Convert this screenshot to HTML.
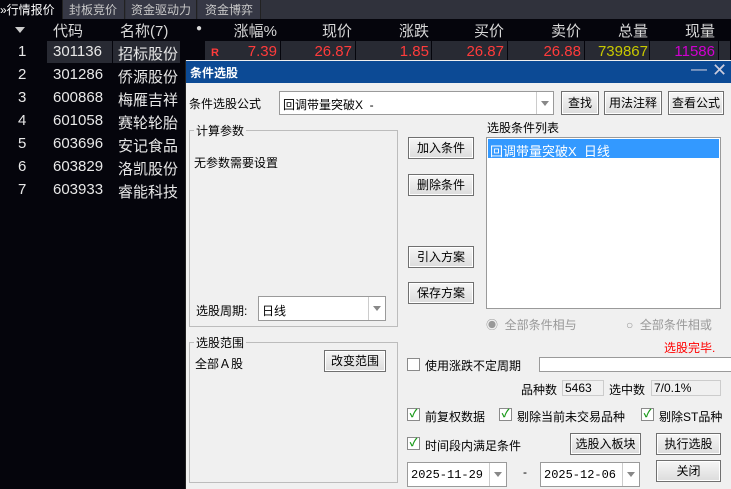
<!DOCTYPE html>
<html><head><meta charset="utf-8"><style>
*{margin:0;padding:0;box-sizing:border-box}
body{width:731px;height:489px;overflow:hidden;background:#05050c;font-family:"Liberation Sans","Noto Sans CJK SC",sans-serif;position:relative}
.a{position:absolute;white-space:nowrap}
.t{color:#c8c8c8;font-size:12px;top:1px}
.tab{position:absolute;top:0;height:19px;background:#363845;border-right:1px solid #222}
.h{color:#d8d8d8;font-size:15px;top:20px}
.c{font-size:15px}
.w{color:#e8e8e8}
.r{color:#ff3b3b}
.cell{position:absolute;top:41px;height:22px;background:#282a33;border-right:1px solid #05050c}
.dlg{position:absolute;left:185px;top:60px;width:546px;height:429px;background:#f0f0f0;border-left:1px solid #222}
.d{position:absolute;white-space:nowrap;font-size:12px;color:#000}
.btn{position:absolute;background:linear-gradient(#f6f6f6,#dcdcdc);border:1px solid #707070;box-shadow:inset 0 0 0 1px #fff;font-size:12px;text-align:center;color:#000}
.box{position:absolute;background:#fff;border:1px solid #9a9a9a}
.grp{position:absolute;border:1px solid #bcbcbc}
.lg{position:absolute;top:-9px;left:4px;background:#f0f0f0;padding:0 2px;font-size:12px}
.arr{position:absolute;right:0;top:0;bottom:0;width:17px;border-left:1px solid #ccc}
.arr:after{content:"";position:absolute;left:4px;top:9px;border:4px solid transparent;border-top:5px solid #888}
.cb{position:absolute;width:13px;height:13px;border:1px solid #8a8a8a;background:#fff;font-size:11px;color:#1a9a1a;line-height:11px;text-align:center;font-weight:bold}
</style></head><body>
<div class="a" style="left:0;top:0;width:731px;height:19px;background:#30323c"></div>
<div class="tab" style="left:0;width:63px;background:#05050c"></div>
<div class="tab" style="left:63px;width:62px"></div>
<div class="tab" style="left:126px;width:71px"></div>
<div class="tab" style="left:198px;width:63px"></div>
<div class="a t" style="left:0;color:#fff">»行情报价</div>
<div class="a t" style="left:69px">封板竞价</div>
<div class="a t" style="left:131px">资金驱动力</div>
<div class="a t" style="left:205px">资金博弈</div>
<div class="a" style="left:15px;top:27px;border:5px solid transparent;border-top:6px solid #ccc"></div>
<div class="a h" style="left:53px">代码</div>
<div class="a h" style="left:120px">名称(7)</div>
<div class="a h" style="left:196px;font-size:10px;top:23px">●</div>
<div class="a h" style="right:454px">涨幅%</div>
<div class="a h" style="right:379px">现价</div>
<div class="a h" style="right:302px">涨跌</div>
<div class="a h" style="right:227px">买价</div>
<div class="a h" style="right:150px">卖价</div>
<div class="a h" style="right:83px">总量</div>
<div class="a h" style="right:16px">现量</div>
<div class="cell" style="left:47px;width:66px"></div>
<div class="cell" style="left:113px;width:68px"></div>
<div class="cell" style="left:205px;width:76px"></div>
<div class="cell" style="left:281px;width:75px"></div>
<div class="cell" style="left:356px;width:76px"></div>
<div class="cell" style="left:432px;width:76px"></div>
<div class="cell" style="left:508px;width:77px"></div>
<div class="cell" style="left:585px;width:65px"></div>
<div class="cell" style="left:650px;width:69px"></div>
<div class="cell" style="left:719px;width:12px"></div>
<div class="a c w" style="left:18px;top:43px">1</div><div class="a c w" style="left:53px;top:43px">301136</div><div class="a c w" style="left:118px;top:43px">招标股份</div>
<div class="a r" style="left:211px;top:47px;font-size:11px;font-weight:bold">R</div>
<div class="a c r" style="right:454px;top:43px">7.39</div>
<div class="a c r" style="right:379px;top:43px">26.87</div>
<div class="a c r" style="right:302px;top:43px">1.85</div>
<div class="a c r" style="right:227px;top:43px">26.87</div>
<div class="a c r" style="right:150px;top:43px">26.88</div>
<div class="a c" style="right:83px;top:43px;color:#c8c800">739867</div>
<div class="a c" style="right:16px;top:43px;color:#d000d0">11586</div>
<div class="a c w" style="left:18px;top:66px">2</div><div class="a c w" style="left:53px;top:66px">301286</div><div class="a c w" style="left:118px;top:66px">侨源股份</div>
<div class="a c w" style="left:18px;top:89px">3</div><div class="a c w" style="left:53px;top:89px">600868</div><div class="a c w" style="left:118px;top:89px">梅雁吉祥</div>
<div class="a c w" style="left:18px;top:112px">4</div><div class="a c w" style="left:53px;top:112px">601058</div><div class="a c w" style="left:118px;top:112px">赛轮轮胎</div>
<div class="a c w" style="left:18px;top:135px">5</div><div class="a c w" style="left:53px;top:135px">603696</div><div class="a c w" style="left:118px;top:135px">安记食品</div>
<div class="a c w" style="left:18px;top:158px">6</div><div class="a c w" style="left:53px;top:158px">603829</div><div class="a c w" style="left:118px;top:158px">洛凯股份</div>
<div class="a c w" style="left:18px;top:181px">7</div><div class="a c w" style="left:53px;top:181px">603933</div><div class="a c w" style="left:118px;top:181px">睿能科技</div>

<div class="dlg">
<div class="d" style="left:0;top:1px;width:546px;height:22px;background:#0c4a95"></div>
<div class="d" style="left:4px;top:4px;color:#fff;font-weight:bold;font-size:12px">条件选股</div>
<div class="d" style="left:505px;top:1px;color:#ccd;font-size:16px">—</div>
<div class="d" style="left:526px;top:0px;color:#ccd;font-size:18px">✕</div>
<div class="d" style="left:3px;top:35px">条件选股公式</div>
<div class="box" style="left:93px;top:31px;width:275px;height:24px"><span class="d" style="left:3px;top:4px">回调带量突破X &nbsp;-</span><div class="arr"></div></div>
<div class="btn" style="left:375px;top:31px;width:38px;height:24px;line-height:22px">查找</div>
<div class="btn" style="left:418px;top:31px;width:58px;height:24px;line-height:22px">用法注释</div>
<div class="btn" style="left:482px;top:31px;width:56px;height:24px;line-height:22px">查看公式</div>
<div class="grp" style="left:3px;top:70px;width:209px;height:197px"><span class="lg">计算参数</span></div>
<div class="d" style="left:8px;top:94px">无参数需要设置</div>
<div class="d" style="left:10px;top:242px">选股周期:</div>
<div class="box" style="left:72px;top:236px;width:128px;height:25px"><span class="d" style="left:3px;top:5px">日线</span><div class="arr"></div></div>
<div class="btn" style="left:222px;top:77px;width:66px;height:22px;line-height:20px">加入条件</div>
<div class="btn" style="left:222px;top:114px;width:66px;height:22px;line-height:20px">删除条件</div>
<div class="btn" style="left:222px;top:186px;width:66px;height:22px;line-height:20px">引入方案</div>
<div class="btn" style="left:222px;top:222px;width:66px;height:22px;line-height:20px">保存方案</div>
<div class="d" style="left:301px;top:59px">选股条件列表</div>
<div class="box" style="left:300px;top:77px;width:235px;height:172px"><div class="d" style="left:1px;top:1px;width:231px;height:19px;background:#3399ff;color:#fff;padding:2px 2px;font-size:13px">回调带量突破X &nbsp;日线</div></div>
<div class="d" style="left:300px;top:256px;color:#999">◉ &nbsp;全部条件相与</div>
<div class="d" style="left:440px;top:256px;color:#999">○ &nbsp;全部条件相或</div>
<div class="d" style="left:478px;top:279px;color:#ff0000">选股完毕.</div>
<div class="grp" style="left:3px;top:282px;width:209px;height:141px"><span class="lg">选股范围</span></div>
<div class="d" style="left:9px;top:295px">全部Ａ股</div>
<div class="btn" style="left:138px;top:290px;width:62px;height:22px;line-height:20px">改变范围</div>
<div class="cb" style="left:221px;top:298px"></div>
<div class="d" style="left:239px;top:297px">使用涨跌不定周期</div>
<div class="box" style="left:353px;top:297px;width:193px;height:15px"></div>
<div class="d" style="left:335px;top:321px">品种数</div>
<div class="box" style="left:376px;top:320px;width:42px;height:16px;background:#f0f0f0;border-color:#ccc"><span class="d" style="left:2px;top:0">5463</span></div>
<div class="d" style="left:423px;top:321px">选中数</div>
<div class="box" style="left:465px;top:320px;width:70px;height:16px;background:#f0f0f0;border-color:#ccc"><span class="d" style="left:2px;top:0">7/0.1%</span></div>
<div class="cb" style="left:221px;top:348px">✓</div><div class="d" style="left:239px;top:348px">前复权数据</div>
<div class="cb" style="left:313px;top:348px">✓</div><div class="d" style="left:331px;top:348px">剔除当前未交易品种</div>
<div class="cb" style="left:455px;top:348px">✓</div><div class="d" style="left:473px;top:348px">剔除ST品种</div>
<div class="cb" style="left:221px;top:377px">✓</div><div class="d" style="left:239px;top:377px">时间段内满足条件</div>
<div class="btn" style="left:384px;top:373px;width:71px;height:22px;line-height:20px">选股入板块</div>
<div class="btn" style="left:470px;top:373px;width:65px;height:22px;line-height:20px">执行选股</div>
<div class="btn" style="left:470px;top:400px;width:65px;height:22px;line-height:20px">关闭</div>
<div class="box" style="left:221px;top:402px;width:100px;height:25px"><span class="d" style="left:3px;top:5px;font-family:'Liberation Mono',monospace">2025-11-29</span><div class="arr"></div></div>
<div class="d" style="left:337px;top:405px">-</div>
<div class="box" style="left:354px;top:402px;width:100px;height:25px"><span class="d" style="left:3px;top:5px;font-family:'Liberation Mono',monospace">2025-12-06</span><div class="arr"></div></div>
</div>
</body></html>
